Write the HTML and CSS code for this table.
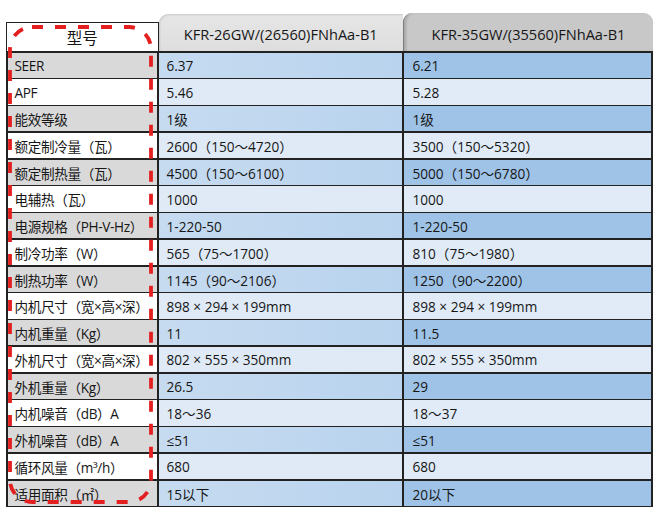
FILE: index.html
```html
<!DOCTYPE html>
<html lang="zh-CN">
<head>
<meta charset="utf-8">
<title>参数对比</title>
<link rel="stylesheet" href="styles.css">
</head>
<body>
<div class="sheet">
  <div class="head">
    <div class="h h-label">型号</div>
    <div class="h h-a">KFR-26GW/(26560)FNhAa-B1</div>
    <div class="h h-b">KFR-35GW/(35560)FNhAa-B1</div>
  </div>
  <div class="grid">
    <div class="c k odd">SEER</div><div class="c a odd">6.37</div><div class="c b odd">6.21</div>
    <div class="c k">APF</div><div class="c a">5.46</div><div class="c b">5.28</div>
    <div class="c k odd">能效等级</div><div class="c a odd">1级</div><div class="c b odd">1级</div>
    <div class="c k">额定制冷量（瓦）</div><div class="c a">2600（150～4720）</div><div class="c b">3500（150～5320）</div>
    <div class="c k odd">额定制热量（瓦）</div><div class="c a odd">4500（150～6100）</div><div class="c b odd">5000（150～6780）</div>
    <div class="c k">电辅热（瓦）</div><div class="c a">1000</div><div class="c b">1000</div>
    <div class="c k odd">电源规格（PH-V-Hz）</div><div class="c a odd">1-220-50</div><div class="c b odd">1-220-50</div>
    <div class="c k">制冷功率（W）</div><div class="c a">565（75～1700）</div><div class="c b">810（75～1980）</div>
    <div class="c k odd">制热功率（W）</div><div class="c a odd">1145（90～2106）</div><div class="c b odd">1250（90～2200）</div>
    <div class="c k">内机尺寸（宽×高×深）</div><div class="c a">898 × 294 × 199mm</div><div class="c b">898 × 294 × 199mm</div>
    <div class="c k odd">内机重量（Kg）</div><div class="c a odd">11</div><div class="c b odd">11.5</div>
    <div class="c k">外机尺寸（宽×高×深）</div><div class="c a">802 × 555 × 350mm</div><div class="c b">802 × 555 × 350mm</div>
    <div class="c k odd">外机重量（Kg）</div><div class="c a odd">26.5</div><div class="c b odd">29</div>
    <div class="c k">内机噪音（dB）A</div><div class="c a">18～36</div><div class="c b">18～37</div>
    <div class="c k odd">外机噪音（dB）A</div><div class="c a odd">≤51</div><div class="c b odd">≤51</div>
    <div class="c k">循环风量（m³/h）</div><div class="c a">680</div><div class="c b">680</div>
    <div class="c k odd">适用面积（㎡）</div><div class="c a odd">15以下</div><div class="c b odd">20以下</div>
  </div>
  <svg class="mark" width="160" height="500" viewBox="0 0 160 500" aria-hidden="true">
    <rect x="4" y="14" width="141" height="475" rx="22" ry="22" fill="none" stroke="#e31f1f" stroke-width="3.8" stroke-dasharray="11 12"/>
  </svg>
</div>
</body>
</html>
```

FILE: styles.css
```css
html, body {
  margin: 0;
  padding: 0;
  background: #ffffff;
}

body {
  font-family: "Open Sans", "Noto Sans CJK SC", sans-serif;
  color: #161616;
}

.sheet {
  position: relative;
  width: 647px;
  margin: 13px 0 0 6px;
}

.head {
  display: flex;
  align-items: flex-end;
  height: 38px;
}

.h {
  box-sizing: border-box;
  display: flex;
  align-items: center;
  justify-content: center;
  font-size: 14.6px;
}

.h-label {
  width: 152.5px;
  height: 29px;
  background: #ffffff;
  border: 1.5px solid #222;
  border-bottom: none;
  font-size: 15.5px;
  padding-top: 1px;
}

.h-a {
  width: 244.5px;
  height: 37px;
  background: linear-gradient(#e6e6e6, #dedede);
  border-top-left-radius: 9px;
  box-shadow: inset 1px 1px 2px rgba(0, 0, 0, 0.12);
  padding-top: 2px;
}

.h-b {
  width: 250px;
  height: 38px;
  background: #c8c8c8;
  border-radius: 9px 9px 0 0;
  border-left: 1.5px solid #7d7d7d;
  box-shadow: inset 3px 0 3px -1px rgba(0, 0, 0, 0.18);
  padding-top: 3px;
}

.grid {
  display: grid;
  grid-template-columns: 149.5px 243.5px 247.5px;
  grid-auto-rows: 25.25px;
  gap: 1.5px;
  padding: 1.5px;
  background: #222;
}

.c {
  display: flex;
  align-items: center;
  font-size: 13.6px;
  white-space: nowrap;
  padding-top: 1px;
}

.k {
  background: #ffffff;
  padding-left: 7px;
  font-size: 13.6px;
  letter-spacing: -0.35px;
  overflow: hidden;
}

.k.odd {
  background: #d9d9d9;
}

.a {
  background: #dfeaf6;
  padding-left: 8px;
}

.a.odd {
  background: linear-gradient(90deg, #c6dbf0, #b9d3ee);
}

.b {
  background: #e0ebf7;
  padding-left: 9px;
}

.b.odd {
  background: #9ec3e7;
}

.mark {
  position: absolute;
  left: 0;
  top: 0;
  pointer-events: none;
}
```
